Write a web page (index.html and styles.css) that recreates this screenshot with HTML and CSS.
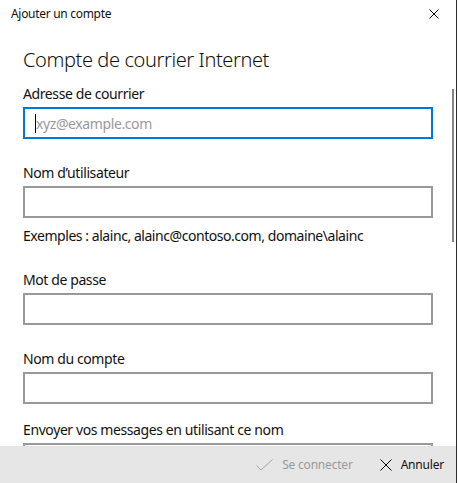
FILE: index.html
```html
<!DOCTYPE html>
<html lang="fr">
<head>
<meta charset="utf-8">
<title>Ajouter un compte</title>
<link rel="stylesheet" href="styles.css">
</head>
<body>
<div class="window">
  <div class="titlebar">
    <span class="titlebar-text">Ajouter un compte</span>
    <span class="close-btn" aria-label="Fermer">
      <svg width="10" height="10" viewBox="0 0 10 10"><path d="M0.5 0.5 L9.5 9.5 M9.5 0.5 L0.5 9.5" stroke="#000" stroke-width="1" fill="none"/></svg>
    </span>
  </div>
  <div class="content">
    <div class="scroll-inner">
      <h1 class="heading">Compte de courrier Internet</h1>
      <div class="field field-first">
        <label class="label">Adresse de courrier</label>
        <div class="input input-focus"><span class="caret"></span><span class="placeholder">xyz@example.com</span></div>
      </div>
      <div class="field">
        <label class="label">Nom d’utilisateur</label>
        <div class="input"></div>
        <p class="hint">Exemples : alainc, alainc@contoso.com, domaine\alainc</p>
      </div>
      <div class="field">
        <label class="label">Mot de passe</label>
        <div class="input"></div>
      </div>
      <div class="field">
        <label class="label">Nom du compte</label>
        <div class="input"></div>
      </div>
      <div class="field field-last">
        <label class="label">Envoyer vos messages en utilisant ce nom</label>
        <div class="input"></div>
      </div>
    </div>
    <div class="scrollbar"></div>
  </div>
  <div class="footer">
    <span class="btn btn-disabled">
      <svg width="17" height="12" viewBox="0 0 17 12"><path d="M0.5 6.5 L5 11 L16.5 0.5" stroke="#a6a6a6" stroke-width="1" fill="none"/></svg>
      <span>Se connecter</span>
    </span>
    <span class="btn">
      <svg width="12" height="12" viewBox="0 0 12 12"><path d="M0.5 0.5 L11.5 11.5 M11.5 0.5 L0.5 11.5" stroke="#000" stroke-width="1" fill="none"/></svg>
      <span>Annuler</span>
    </span>
  </div>
</div>
</body>
</html>
```
FILE: styles.css
```css
html, body {
  margin: 0;
  padding: 0;
  background: #fff;
}
body {
  font-family: "Noto Sans", "Open Sans", sans-serif;
  color: #111;
}
.window {
  width: 456px;
  height: 483px;
  border-right: 1px solid #2d2d2d;
  display: flex;
  flex-direction: column;
  overflow: hidden;
  background: #fff;
}
.titlebar {
  height: 28px;
  flex: 0 0 28px;
  display: flex;
  align-items: center;
  justify-content: space-between;
  padding: 0 17px 0 11px;
}
.titlebar-text {
  font-size: 12px;
  line-height: 28px;
  letter-spacing: -0.3px;
}
.close-btn {
  display: flex;
  width: 10px;
  height: 10px;
}
.content {
  flex: 1 1 auto;
  position: relative;
  overflow: hidden;
}
.scroll-inner {
  padding: 0 23px;
}
.heading {
  margin: 16px 0 0;
  font-size: 20px;
  font-weight: 300;
  line-height: 32px;
  letter-spacing: -0.4px;
}
.field {
  margin-top: 24px;
}
.field-first {
  margin-top: 8px;
}
.field-last {
  margin-top: 16px;
}
.label {
  display: block;
  font-size: 14px;
  line-height: 20px;
  margin-bottom: 3px;
  letter-spacing: -0.4px;
}
.input {
  box-sizing: border-box;
  height: 32px;
  border: 2px solid #999;
  display: flex;
  align-items: center;
  padding-left: 10px;
}
.input-focus {
  border-color: #0078d7;
}
.caret {
  width: 1px;
  height: 19px;
  background: #000;
}
.placeholder {
  font-size: 14px;
  color: #999;
  letter-spacing: -0.4px;
}
.hint {
  margin: 8px 0 0;
  font-size: 14px;
  line-height: 20px;
  letter-spacing: -0.45px;
}
.scrollbar {
  position: absolute;
  right: 2px;
  top: 61px;
  width: 2px;
  height: 153px;
  background: #868686;
}
.footer {
  flex: 0 0 37px;
  height: 37px;
  background: #e6e6e6;
  display: flex;
  align-items: center;
  justify-content: flex-end;
  gap: 27px;
  padding-right: 12px;
}
.btn {
  display: flex;
  align-items: center;
  gap: 9px;
  font-size: 12px;
  letter-spacing: -0.2px;
}
.btn-disabled {
  color: #9a9a9a;
}
```
